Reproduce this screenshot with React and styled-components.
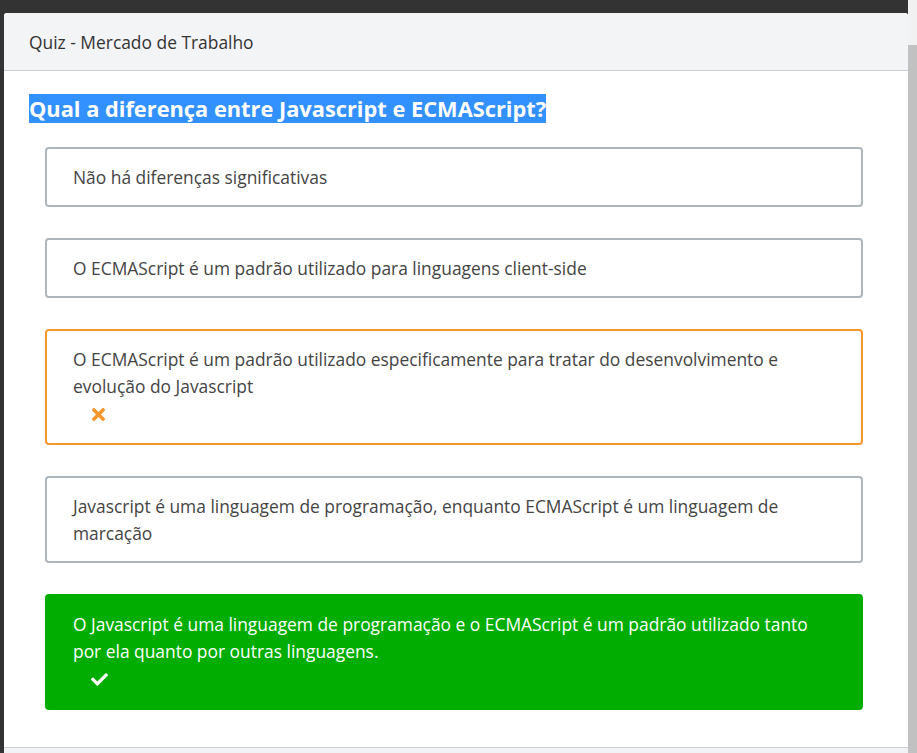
import React from 'react';
import styled, { createGlobalStyle } from 'styled-components';
import { FaTimes, FaCheck } from 'react-icons/fa';

const Global = createGlobalStyle`
    body {
        margin:0;
        background:#333333;
        font-family:"Open Sans", "Liberation Sans", sans-serif;
        overflow:hidden;
    }
`;

const Page = styled.div`
    display:flex;
    height:753px;
`;

const Stage = styled.div`
    flex-grow:1;
    padding:13px 0px 0px 4px;
`;

const Scrollbar = styled.div`
    width:12px;
    background:#f1f1f1;
    padding-top:45px;
    display:flex;
    & > div {
        flex-grow:1;
        background:#c1c1c1;
    }
`;

const Modal = styled.div`
    background:#ffffff;
    border-radius:3px 3px 0px 0px;
    height:740px;
    display:flex;
    flex-direction:column;
    overflow:hidden;
`;

const Header = styled.div`
    background:#f3f4f6;
    border-bottom:1px solid #c9ced4;
    height:57px;
    flex-shrink:0;
    display:flex;
    align-items:center;
    padding:0px 25px;
    font-size:17.4px;
    color:#333333;
`;

const Body = styled.div`
    padding:24px 29px 0px 25px;
    flex-grow:1;
`;

const Question = styled.h2`
    margin:0px 0px 24px 0px;
    font-size:21.8px;
    font-weight:700;
    line-height:28px;
    & > span {
        background:#3390ff;
        color:#ffffff;
    }
`;

const Options = styled.div`
    display:flex;
    flex-direction:column;
    gap:31px;
    margin:0px 16px;
`;

const kinds = {
    idle: { border:'#adb5bd', bg:'#ffffff', color:'#444444' },
    wrong: { border:'#f7962f', bg:'#ffffff', color:'#444444' },
    right: { border:'#00ad00', bg:'#00ad00', color:'#ffffff' },
};

const Option = styled.div`
    border:2px solid ${({kind}) => kinds[kind].border};
    background:${({kind}) => kinds[kind].bg};
    color:${({kind}) => kinds[kind].color};
    border-radius:4px;
    padding:15px 26px 14px 26px;
    font-size:17.4px;
    line-height:27px;
`;

const Mark = styled.div`
    height:29px;
    display:flex;
    align-items:center;
    padding-left:${({indent}) => indent}px;
    font-size:${({size}) => size}px;
    color:${({color}) => color};
`;

const Footer = styled.div`
    height:5px;
    flex-shrink:0;
    border-top:1px solid #ced2d8;
    background:#f1f2f4;
`;

const answers = [
    { text:'Não há diferenças significativas', kind:'idle' },
    { text:'O ECMAScript é um padrão utilizado para linguagens client-side', kind:'idle' },
    { text:'O ECMAScript é um padrão utilizado especificamente para tratar do desenvolvimento e evolução do Javascript', kind:'wrong' },
    { text:'Javascript é uma linguagem de programação, enquanto ECMAScript é um linguagem de marcação', kind:'idle' },
    { text:'O Javascript é uma linguagem de programação e o ECMAScript é um padrão utilizado tanto por ela quanto por outras linguagens.', kind:'right' },
];

const App = () => <Page>
    <Global />
    <Stage>
        <Modal>
            <Header>Quiz - Mercado de Trabalho</Header>
            <Body>
                <Question><span>Qual a diferença entre Javascript e ECMAScript?</span></Question>
                <Options>{
                    answers.map((a, idx) => <Option key={idx} kind={a.kind}>
                        {a.text}
                        {a.kind == 'wrong' && <Mark color="#f7962f" size={19} indent={16}><FaTimes /></Mark>}
                        {a.kind == 'right' && <Mark color="#ffffff" size={17} indent={18}><FaCheck /></Mark>}
                    </Option>)
                }</Options>
            </Body>
            <Footer />
        </Modal>
    </Stage>
    <Scrollbar><div /></Scrollbar>
</Page>

export default App;
